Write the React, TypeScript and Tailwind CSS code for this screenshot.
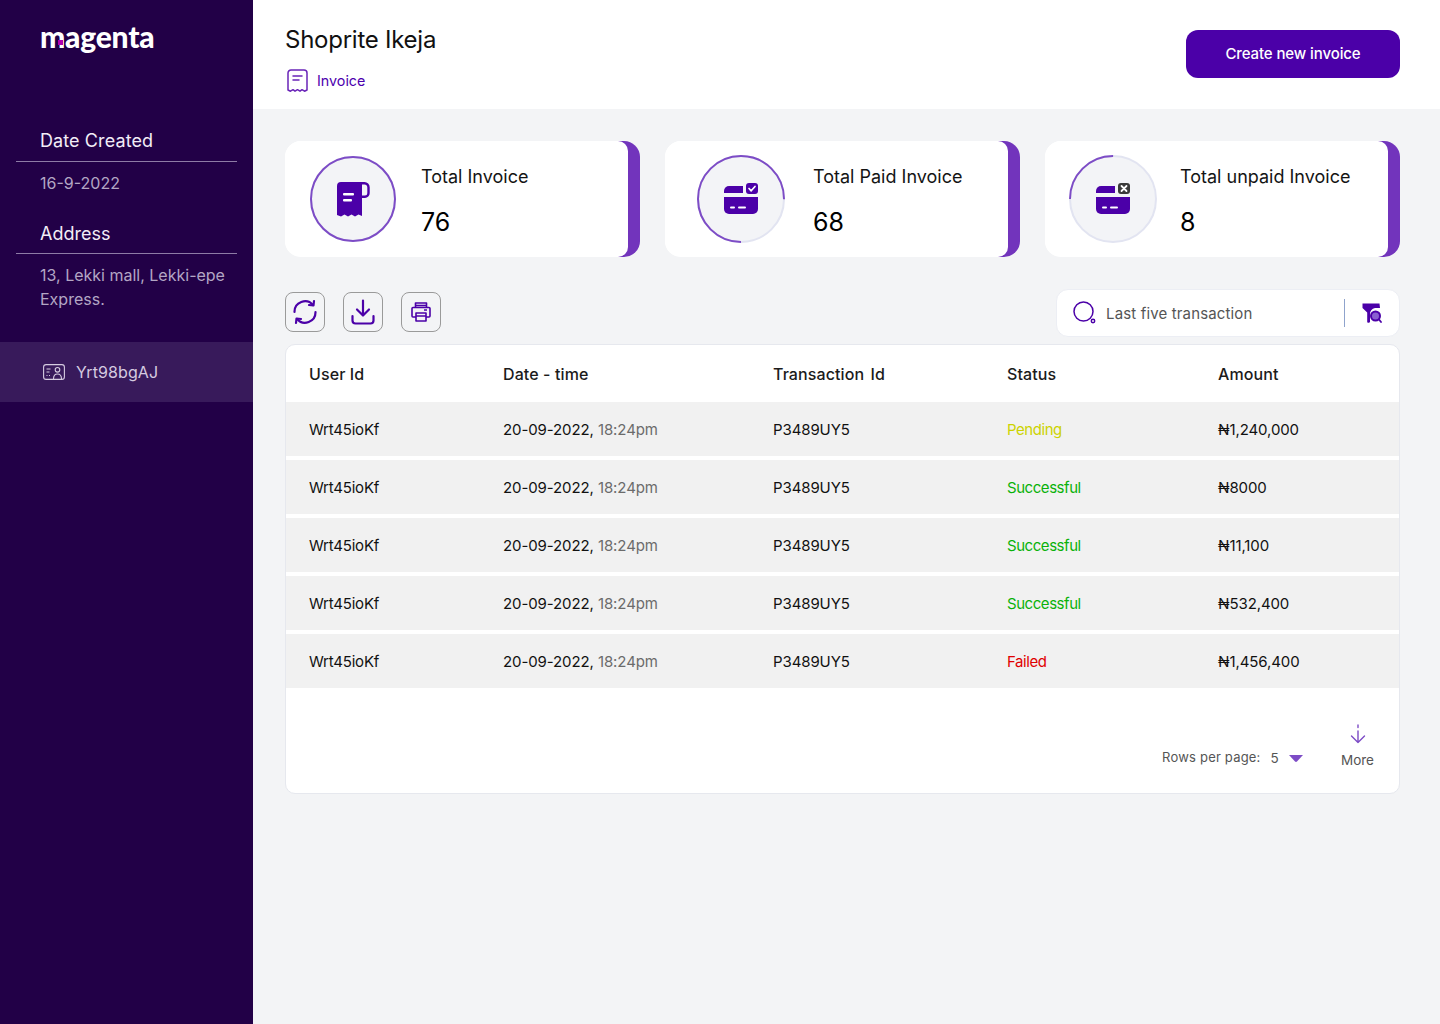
import React from "react";

const P = "#4B00A8";
const A = "#7D4CC6";

function Ring({ start, pct, size }: { start: number; pct: number; size: number }) {
  const r = size / 2 - 1;
  const c = 2 * Math.PI * r;
  return (
    <svg width={size} height={size} className="absolute inset-0">
      <circle cx={size / 2} cy={size / 2} r={r} fill="#F3F4F7" stroke="#E2E4F1" strokeWidth="2" />
      <circle
        cx={size / 2}
        cy={size / 2}
        r={r}
        fill="none"
        stroke={A}
        strokeWidth="2"
        strokeDasharray={`${(pct / 100) * c} ${c}`}
        transform={`rotate(${start} ${size / 2} ${size / 2})`}
      />
    </svg>
  );
}

function ReceiptIcon() {
  return (
    <svg width="33" height="35" viewBox="0 0 33 35">
      <path d="M4 0H25V34l-3.500-1.500-3.500 2-3.500-2-3.500 2-3.500-2-3.500 2-4-1.500V4a4 4 0 0 1 4-4Z" fill={P} />
      <path d="M24 1.200h3.500a4 4 0 0 1 4 4v6a3.500 3.500 0 0 1-3.500 3.500H24" fill="none" stroke={P} strokeWidth="2.400" />
      <rect x="6" y="11" width="11" height="2.400" rx="1" fill="#fff" />
      <rect x="6" y="17" width="9" height="2.400" rx="1" fill="#fff" />
    </svg>
  );
}

function CardIcon({ bad }: { bad?: boolean }) {
  return (
    <svg width="34" height="32" viewBox="0 0 34 32">
      <path d="M5 3H19V10H0V8a5 5 0 0 1 5-5Z" fill={P} />
      <path d="M0 14H34V26a5 5 0 0 1-5 5H5a5 5 0 0 1-5-5Z" fill={P} />
      <rect x="6" y="23.500" width="5" height="2" rx="1" fill="#fff" />
      <rect x="14" y="23.500" width="8" height="2" rx="1" fill="#fff" />
      <rect x="22" y="0" width="12" height="11" rx="3" fill={bad ? "#3B3B3B" : P} />
      {bad ? (
        <path d="M25.500 3 30.500 8M30.500 3 25.500 8" stroke="#fff" strokeWidth="1.800" strokeLinecap="round" />
      ) : (
        <path d="M25 5.500 27.200 7.800 31 3.500" fill="none" stroke="#fff" strokeWidth="1.700" strokeLinecap="round" strokeLinejoin="round" />
      )}
    </svg>
  );
}

function StatCard({ title, value, start, ring, size, gap, left, icon }: { title: string; value: string; start: number; ring: number; size: number; gap: string; left: string; icon: React.ReactNode }) {
  return (
    <div className="flex-1 h-[116px] bg-[linear-gradient(90deg,#fff_50%,#7234BC_50%)] rounded-2xl">
      <div className={`h-full bg-white rounded-l-2xl rounded-r-[10px] mr-3 flex items-center ${left} ${gap}`}>
        <div className="relative shrink-0 flex items-center justify-center" style={{ width: size, height: size }}>
          <Ring start={start} pct={ring} size={size} />
          <div className="relative flex">{icon}</div>
        </div>
        <div className="flex flex-col pt-[6px]">
          <div className="text-[18px] leading-[22px] text-[#141414]">{title}</div>
          <div className="text-[25px] leading-[32px] text-black mt-[18px]">{value}</div>
        </div>
      </div>
    </div>
  );
}

const cols = "grid grid-cols-[194px_270px_234px_211px_1fr] pl-[23px] items-center";

const rows = [
  ["Pending", "text-[#CCD300]", "₦1,240,000"],
  ["Successful", "text-[#0AB20A]", "₦8000"],
  ["Successful", "text-[#0AB20A]", "₦11,100"],
  ["Successful", "text-[#0AB20A]", "₦532,400"],
  ["Failed", "text-[#E00000]", "₦1,456,400"],
];

export default function App() {
  return (
    <div className="flex min-h-[1024px] bg-[#F3F4F6] font-['Inter',sans-serif]">
      <aside className="w-[253px] shrink-0 bg-[#220047] text-white">
        <div className="h-[122px] pl-10 pt-[18px]">
          <div className="relative w-fit font-['Lato',sans-serif] font-black text-[30px] leading-[36px] tracking-[-0.2px] text-white">
            magenta
            <span className="absolute left-[18px] top-[22px] w-[5px] h-[5px] bg-[#B000B0]" />
          </div>
        </div>
        <div className="px-4">
          <div className="h-10 pl-6 pb-[2px] flex items-center border-b border-[#8E7BA6] text-[18px] text-[#F2EDF7] tracking-[0.1px]">Date Created</div>
          <div className="pl-6 h-[42px] flex items-center text-[16px] text-[#B3A6C4]">16-9-2022</div>
          <div className="h-[50px] pl-6 pt-[10px] flex items-center border-b border-[#8E7BA6] text-[18px] text-[#F2EDF7]">Address</div>
          <div className="pl-6 pt-[9px] text-[16px] leading-[24px] text-[#B3A6C4] h-[88px] pr-2">13, Lekki mall, Lekki-epe Express.</div>
        </div>
        <div className="h-[60px] bg-[#381A5B] pl-[43px] flex items-center gap-[11px] text-[16px] text-[#D5CBE0] tracking-[0.1px]">
          <svg width="22" height="16" viewBox="0 0 22 16" fill="none" stroke="#D5CBE0" strokeWidth="1.100">
            <rect x="0.600" y="0.600" width="20.800" height="14.800" rx="2.500" />
            <path d="M3.500 5h4M3.500 8h3M3.500 11.500h1M6 11.500h1" />
            <circle cx="14.500" cy="5.800" r="2.300" />
            <path d="M10.500 15c0-3.500 1.500-5 4-5s4 1.500 4 5" />
          </svg>
          Yrt98bgAJ
        </div>
      </aside>

      <main className="flex-1 min-w-0">
        <header className="h-[109px] bg-white pl-8 pr-10 flex justify-between">
          <div className="pt-[25px]">
            <h1 className="text-[24px] leading-[30px] text-[#111] tracking-[-0.25px]">Shoprite Ikeja</h1>
            <div className="mt-[14px] ml-[2px] flex items-center gap-[9px] text-[14.300px] text-[#4D00AE]">
              <svg width="21" height="23" viewBox="0 0 21 23" fill="none" stroke="#6A25B8" strokeWidth="1.500" strokeLinejoin="round" strokeLinecap="round">
                <path d="M4 1h13a3 3 0 0 1 3 3v17l-2.500 1.200-2.500-1.500-2 1.500-2.500-1.500-2.500 1.500-2-1.500-2.500 1.500L1 21V4a3 3 0 0 1 3-3Z" />
                <path d="M6 7h9M6 11h6" />
              </svg>
              Invoice
            </div>
          </div>
          <button className="mt-[30px] w-[214px] h-12 pt-[1px] rounded-xl bg-[#4B00A8] text-white text-[15px] font-medium tracking-[-0.1px]">Create new invoice</button>
        </header>

        <div className="pl-8 pr-10 pt-8">
          <div className="flex gap-[25px]">
            <StatCard title="Total Invoice" value="76" start={0} ring={100} size={86} left="pl-[25px]" gap="gap-[25px]" icon={<ReceiptIcon />} />
            <StatCard title="Total Paid Invoice" value="68" start={90} ring={75} size={88} left="pl-8" gap="gap-7" icon={<CardIcon />} />
            <StatCard title="Total unpaid Invoice" value="8" start={180} ring={25} size={88} left="pl-6" gap="gap-[23px]" icon={<CardIcon bad />} />
          </div>

          <div className="mt-8 flex items-start justify-between">
            <div className="flex gap-[18px] mt-[3px]">
              <button className="w-10 h-10 border border-[#9A9A9A] rounded-lg flex items-center justify-center">
                <svg width="26" height="26" viewBox="0 0 26 26" fill="none" stroke={P} strokeWidth="2.200" strokeLinecap="round" strokeLinejoin="round">
                  <path d="M2.500 13A10.500 10.500 0 0 1 21 6" />
                  <path d="M22 2 21.500 6.500 17 6" />
                  <path d="M23.500 13A10.500 10.500 0 0 1 5 20" />
                  <path d="M4 24 4.500 19.500 9 20" />
                </svg>
              </button>
              <button className="w-10 h-10 border border-[#9A9A9A] rounded-lg flex items-center justify-center">
                <svg width="24" height="26" viewBox="0 0 24 26" fill="none" stroke={P} strokeWidth="2.200" strokeLinecap="round" strokeLinejoin="round">
                  <path d="M12 1.500V16M6 10.500 12 16.500 18 10.500" />
                  <path d="M1.500 17v4.500a3 3 0 0 0 3 3h15a3 3 0 0 0 3-3V17" />
                </svg>
              </button>
              <button className="w-10 h-10 border border-[#9A9A9A] rounded-lg flex items-center justify-center">
                <svg width="20" height="20" viewBox="0 0 20 20" fill="none" stroke={P} strokeWidth="1.600" strokeLinejoin="round">
                  <path d="M4.500 5.500V1h11v4.500" />
                  <path d="M4.500 3.500h11" />
                  <rect x="1" y="5.500" width="18" height="9.500" rx="1" />
                  <rect x="5" y="11" width="10" height="8" fill="#F3F4F6" />
                  <path d="M5 14h10M13 8h3" />
                </svg>
              </button>
            </div>
            <div className="w-[344px] h-12 bg-white border border-[#ECEEF4] rounded-xl flex items-center pl-4 text-[15px] text-[#555] tracking-[0.15px]">
              <svg width="24" height="24" viewBox="0 0 24 24" fill="none" stroke={P} strokeWidth="1.500" className="mr-[9px] shrink-0">
                <circle cx="10.500" cy="10.500" r="9.500" />
                <circle cx="20" cy="20" r="1.700" />
              </svg>
              <span className="flex-1 pt-[2px]">Last five transaction</span>
              <span className="w-px h-7 bg-[#8FA3CC]" />
              <svg width="20" height="20" viewBox="0 0 20 20" className="ml-[17px] mr-[17px] shrink-0">
                <path d="M0.500 0.500H17.500L18 5H13a6 6 0 0 0-5 6.500V18a1.500 1.500 0 0 1-2.800 1V9.500L0.500 5Z" fill={P} />
                <circle cx="13.500" cy="13" r="4.500" fill="#8A5FD0" stroke={P} strokeWidth="2" />
                <path d="M17 16.500 19 19" stroke={P} strokeWidth="1.800" strokeLinecap="round" />
              </svg>
            </div>
          </div>

          <div className="mt-[7px] h-[450px] bg-white border border-[#E6E8EE] rounded-[10px] overflow-hidden">
            <div className={`${cols} h-[57px] pt-[1px] text-[16px] font-medium text-[#1B1B1B] tracking-[0.1px]`}>
              <div>User Id</div>
              <div>Date - time</div>
              <div className="[word-spacing:2px]">Transaction Id</div>
              <div>Status</div>
              <div>Amount</div>
            </div>
            <div className="flex flex-col gap-1">
              {rows.map(([status, color, amount], i) => (
                <div key={i} className={`${cols} h-[54px] pt-[2px] bg-[#F1F1F1] text-[15px] text-[#111] tracking-[-0.1px]`}>
                  <div className="tracking-[-0.2px]">Wrt45ioKf</div>
                  <div>
                    20-09-2022, <span className="text-[#6B6B6B]">18:24pm</span>
                  </div>
                  <div>P3489UY5</div>
                  <div className={`${color} tracking-[-0.45px]`}>{status}</div>
                  <div>{amount}</div>
                </div>
              ))}
            </div>
            <div className="h-[105px] flex justify-end items-start pr-[25px] pt-[36px]">
              <div className="flex items-center mt-[24px] text-[13px] text-[#555] tracking-[0.2px]">
                Rows per page:
                <span className="ml-[10px] text-[13.500px]">5</span>
                <svg width="14" height="7" viewBox="0 0 14 7" className="ml-[10px]">
                  <path d="M0 0H14L8 6.500a1.500 1.500 0 0 1-2 0Z" fill={A} />
                </svg>
              </div>
              <div className="ml-[38px] flex flex-col items-center text-[13.500px] text-[#555]">
                <svg width="16" height="20" viewBox="0 0 16 20" fill="none" stroke={A} strokeWidth="1.400" strokeLinecap="round" strokeLinejoin="round" className="ml-[1px]">
                  <path d="M8 1v2.500M8 7v11.500M1.500 12 8 18.500 14.500 12" />
                </svg>
                <span className="mt-[8px] leading-4">More</span>
              </div>
            </div>
          </div>
        </div>
      </main>
    </div>
  );
}
